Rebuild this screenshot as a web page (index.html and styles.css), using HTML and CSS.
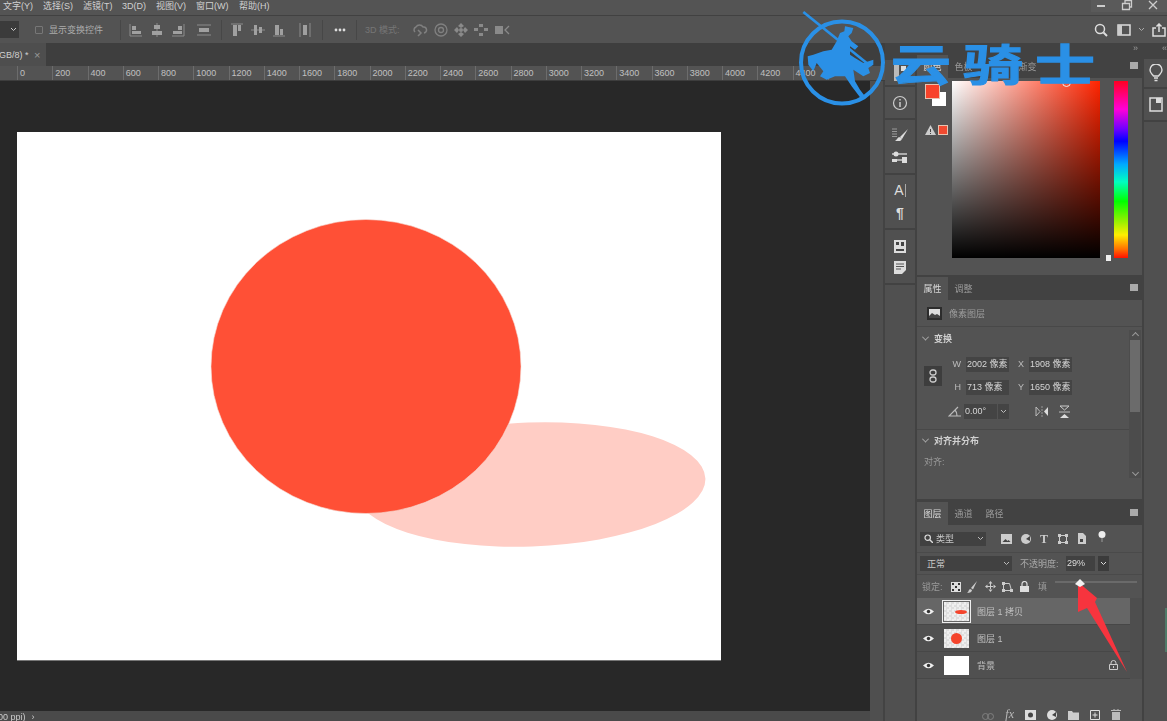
FILE: index.html
```html
<!DOCTYPE html>
<html lang="zh">
<head>
<meta charset="utf-8">
<title>Photoshop</title>
<link rel="stylesheet" href="styles.css">
</head>
<body>
<div class="app">
  <header class="menubar">
    <nav class="menus">
      <span class="m1">文字(Y)</span><span class="m2">选择(S)</span><span class="m3">滤镜(T)</span><span class="m4">3D(D)</span><span class="m5">视图(V)</span><span class="m6">窗口(W)</span><span class="m7">帮助(H)</span>
    </nav>
    <div class="winbtns">
      <svg width="12" height="12" viewBox="0 0 12 12"><rect x="2" y="6" width="8" height="2" fill="#ccc"/></svg>
      <svg width="12" height="12" viewBox="0 0 12 12"><path d="M1.500 4.500h7v6h-7zM4 4V1.500h6.500V8H9" fill="none" stroke="#ccc" stroke-width="1.300"/></svg>
      <svg width="12" height="12" viewBox="0 0 12 12"><path d="M2 2l8 8M10 2l-8 8" stroke="#ccc" stroke-width="1.300"/></svg>
    </div>
  </header>

  <section class="options">
    <div class="tool-select"><svg width="7" height="5" viewBox="0 0 7 5"><path d="M1 1l2.500 2.500L6 1" fill="none" stroke="#ccc"/></svg></div>
    <span class="check"></span><span class="opt-label">显示变换控件</span>
    <i class="sep s1"></i>
    <div class="igroup g1">
      <svg width="14" height="14" viewBox="0 0 14 14"><path d="M1 1v12h12" fill="none" stroke="#8c8c8c"/><path d="M3 3h4v4H3zM3 8h9v3H3z" fill="#a0a0a0"/></svg>
      <svg width="14" height="14" viewBox="0 0 14 14"><path d="M7 0v14" stroke="#8c8c8c"/><path d="M4 2h6v4H4zM2 8h10v4H2z" fill="#a0a0a0"/></svg>
      <svg width="14" height="14" viewBox="0 0 14 14"><path d="M13 1v12H1" fill="none" stroke="#8c8c8c"/><path d="M7 3h4v4H7zM2 8h9v3H2z" fill="#a0a0a0"/></svg>
      <svg class="wide" width="14" height="14" viewBox="0 0 14 14"><path d="M0 2h14M0 12h14" stroke="#8c8c8c"/><path d="M2 5h10v4H2z" fill="#a0a0a0"/></svg>
    </div>
    <i class="sep s2"></i>
    <div class="igroup g2">
      <svg width="14" height="14" viewBox="0 0 14 14"><path d="M1 1h12" stroke="#8c8c8c"/><path d="M3 2h4v11H3zM8 2h3v6H8z" fill="#a0a0a0"/></svg>
      <svg width="14" height="14" viewBox="0 0 14 14"><path d="M0 7h14" stroke="#8c8c8c"/><path d="M3 2h3v10H3zM8 4h3v6H8z" fill="#a0a0a0"/></svg>
      <svg width="14" height="14" viewBox="0 0 14 14"><path d="M1 13h12" stroke="#8c8c8c"/><path d="M3 2h4v10H3zM8 6h3v6H8z" fill="#a0a0a0"/></svg>
      <svg class="wide" width="14" height="14" viewBox="0 0 14 14"><path d="M2 0v14M12 0v14" stroke="#8c8c8c"/><path d="M5 2h4v10H5z" fill="#a0a0a0"/></svg>
    </div>
    <i class="sep s3"></i>
    <svg class="dots" width="12" height="4" viewBox="0 0 12 4"><circle cx="2" cy="2" r="1.400" fill="#ddd"/><circle cx="6" cy="2" r="1.400" fill="#ddd"/><circle cx="10" cy="2" r="1.400" fill="#ddd"/></svg>
    <i class="sep s4"></i>
    <span class="mode3d">3D 模式:</span>
    <div class="igroup g3">
      <svg width="16" height="14" viewBox="0 0 16 14"><path d="M3 9a3 3 0 0 1 1-5 4 4 0 0 1 7 0 3 3 0 0 1 1 6M6 7l3 3-3 3" fill="none" stroke="#808080" stroke-width="1.500"/></svg>
      <svg width="14" height="14" viewBox="0 0 14 14"><circle cx="7" cy="7" r="6" fill="none" stroke="#808080" stroke-width="1.300"/><circle cx="7" cy="7" r="2.500" fill="none" stroke="#808080" stroke-width="1.300"/></svg>
      <svg width="14" height="14" viewBox="0 0 14 14"><path d="M7 0l3 3-3 2-3-2zM7 14l3-3-3-2-3 2zM0 7l3-3 2 3-2 3zM14 7l-3-3-2 3 2 3z" fill="#8a8a8a"/><circle cx="7" cy="7" r="2" fill="#8a8a8a"/></svg>
      <svg width="14" height="14" viewBox="0 0 14 14"><path d="M5 1h4v3H5zM5 10h4v3H5zM0 5h4v3H0zM10 5h4v3h-4z" fill="#8a8a8a"/></svg>
      <svg width="16" height="14" viewBox="0 0 16 14"><path d="M1 3h8v8H1z" fill="#8a8a8a"/><path d="M15 3l-4 4 4 4" fill="none" stroke="#8a8a8a" stroke-width="1.300"/></svg>
    </div>
    <div class="opt-right">
      <svg width="14" height="14" viewBox="0 0 14 14"><circle cx="6" cy="6" r="4.500" fill="none" stroke="#ddd" stroke-width="1.500"/><path d="M9.500 9.500L13 13" stroke="#ddd" stroke-width="2"/></svg>
      <svg width="14" height="14" viewBox="0 0 14 14"><path d="M1 2h12v10H1z" fill="none" stroke="#ddd" stroke-width="1.500"/><path d="M1 2h4v10H1z" fill="#ccc"/></svg>
      <svg class="caret" width="7" height="5" viewBox="0 0 7 5"><path d="M1 1l2.500 2.500L6 1" fill="none" stroke="#aaa"/></svg>
      <svg width="14" height="14" viewBox="0 0 14 14"><path d="M4 5H1v8h12V5h-3M7 9V1M4.500 3.500L7 1l2.500 2.500" fill="none" stroke="#ddd" stroke-width="1.500"/></svg>
    </div>
  </section>

  <div class="main">
    <div class="doc">
      <div class="tabbar"><div class="tab"><span>GB/8) *</span><b>×</b></div></div>
      <div class="ruler">
        <span>0</span><span>200</span><span>400</span><span>600</span><span>800</span><span>1000</span><span>1200</span><span>1400</span><span>1600</span><span>1800</span><span>2000</span><span>2200</span><span>2400</span><span>2600</span><span>2800</span><span>3000</span><span>3200</span><span>3400</span><span>3600</span><span>3800</span><span>4000</span><span>4200</span><span>4400</span><span>4600</span>
      </div>
      <div class="doc-body">
        <div class="doc-left">
          <div class="canvas">
            <div class="artboard">
              <svg width="704" height="528" viewBox="0 0 704 528">
                <ellipse cx="513" cy="352.500" rx="175.500" ry="62" transform="rotate(-2 513 352.500)" fill="#ffcdc5"/>
                <ellipse cx="349" cy="234.500" rx="155" ry="147" fill="#ff5036" stroke="#f5e0da" stroke-width=".6"/>
              </svg>
            </div>
          </div>
          <div class="status"><span>00 ppi)</span><b>›</b></div>
        </div>
        <div class="vscroll"></div>
      </div>
    </div>

    <div class="dock">
      <div class="strip strip-left">
        <div class="sgroup h-a"><svg width="14" height="18" viewBox="0 0 14 18"><path d="M1 1h5v16H1z" fill="#bbb"/><path d="M8 2h5v5H8zM8 10l5-2v9H8z" fill="#ddd"/></svg></div>
        <div class="sgroup h-b"><svg width="16" height="16" viewBox="0 0 16 16"><circle cx="8" cy="8" r="6.500" fill="none" stroke="#ccc" stroke-width="1.200"/><path d="M8 7v5M8 4v1.500" stroke="#ccc" stroke-width="1.500"/></svg></div>
        <div class="sgroup h-c">
          <svg width="18" height="15" viewBox="0 0 18 15"><path d="M1 1h5M1 3.500h5M1 6h5M1 8.500h5" stroke="#999"/><path d="M17 1L9 9l2 2z" fill="#ddd"/><path d="M8 9c-2 1-2 3-4 4h5c2-1 2-2 1.500-3z" fill="#ddd"/></svg>
          <svg width="18" height="14" viewBox="0 0 18 14"><path d="M1 3h15M1 9h15" stroke="#ccc" stroke-width="1.500"/><circle cx="5" cy="3" r="2.500" fill="#ddd"/><rect x="11" y="6" width="5" height="6" fill="#ddd"/><rect x="1" y="8" width="5" height="3" fill="#ddd"/></svg>
        </div>
        <div class="sgroup h-c">
          <span class="glyph-a">A<i></i></span>
          <span class="glyph-p">¶</span>
        </div>
        <div class="sgroup h-c">
          <svg width="12" height="13" viewBox="0 0 12 13"><path d="M0 0h12v13H0z" fill="#ddd"/><path d="M2 2h3v3H2zM7 2h3v4H7zM2 9h8v2H2z" fill="#444"/></svg>
          <svg width="12" height="13" viewBox="0 0 12 13"><path d="M0 0h12v9l-4 4H0z" fill="#ddd"/><path d="M2 3h8M2 5.500h8M2 8h5" stroke="#555"/></svg>
        </div>
        <div class="sgroup sfill"></div>
      </div>

      <div class="panels">
        <div class="collapse"><span>»</span></div>
        <section class="panel p-color">
          <div class="ptabs"><span class="ptab active">颜色</span><span class="ptab">色板</span><span class="ptab far">渐变</span><i class="pmenu"></i></div>
          <div class="color-body">
            <div class="swatches">
              <span class="bg-sw"></span><span class="fg-sw"></span>
              <div class="warn"><svg width="11" height="10" viewBox="0 0 11 10"><path d="M5.500 0L11 10H0z" fill="#ccc"/><path d="M5 4h1v3H5zM5 8h1v1H5z" fill="#444"/></svg><span class="mini-sw"></span></div>
            </div>
            <div class="picker"><span class="picker-dot"></span></div>
            <div class="hue-wrap"><span class="hue-arrow"></span><div class="hue"></div></div>
          </div>
        </section>

        <section class="panel p-props">
          <div class="ptabs"><span class="ptab active">属性</span><span class="ptab">调整</span><i class="pmenu"></i></div>
          <div class="pixel-row">
            <svg width="15" height="13" viewBox="0 0 15 13"><path d="M0 0h15v13H0z" fill="#2c2c2c"/><path d="M2 2h11v9H2z" fill="#ddd"/><path d="M2 9l3-3 3 2 2-1 3 2v2H2z" fill="#444"/></svg>
            <span>像素图层</span>
          </div>
          <div class="props-body">
            <div class="props-main">
              <div class="sect-title"><u></u>变换</div>
              <div class="transform">
                <span class="linkbtn"><svg width="8" height="14" viewBox="0 0 8 14"><rect x="1" y="1" width="6" height="5" rx="2.500" fill="none" stroke="#ccc" stroke-width="1.300"/><rect x="1" y="8" width="6" height="5" rx="2.500" fill="none" stroke="#ccc" stroke-width="1.300"/></svg></span>
                <div class="tf-grid">
                  <label>W</label><span class="field f1">2002 像素</span><label>X</label><span class="field f2">1908 像素</span>
                  <label>H</label><span class="field f1">713 像素</span><label>Y</label><span class="field f2">1650 像素</span>
                </div>
              </div>
              <div class="rot-row">
                <svg width="14" height="11" viewBox="0 0 14 11"><path d="M13 10H1L10 1M7 4q2 2 2 6" fill="none" stroke="#bbb" stroke-width="1.200"/></svg>
                <span class="field f3">0.00°</span><span class="rot-caret"><svg width="7" height="5" viewBox="0 0 7 5"><path d="M1 1l2.500 2.500L6 1" fill="none" stroke="#bbb"/></svg></span>
                <svg class="flip" width="14" height="11" viewBox="0 0 14 11"><path d="M7 0v11" stroke="#999" stroke-dasharray="2 1"/><path d="M1 1l4 4.500L1 10z" fill="none" stroke="#bbb"/><path d="M13 1L9 5.500l4 4.500z" fill="#ddd"/></svg>
                <svg class="flip2" width="11" height="14" viewBox="0 0 11 14"><path d="M0 7h11" stroke="#bbb"/><path d="M1 1h9L5.500 5z" fill="none" stroke="#ccc"/><path d="M1 13h9L5.500 9z" fill="#ddd"/></svg>
              </div>
              <div class="divider"></div>
              <div class="sect-title t2"><u></u>对齐并分布</div>
              <div class="align-label">对齐:</div>
            </div>
            <div class="pscroll"><span class="thumb"></span></div>
          </div>
        </section>

        <section class="panel p-layers">
          <div class="ptabs"><span class="ptab active">图层</span><span class="ptab">通道</span><span class="ptab">路径</span><i class="pmenu"></i></div>
          <div class="filter-row">
            <div class="ddl dd-type"><svg width="9" height="9" viewBox="0 0 9 9"><circle cx="3.700" cy="3.700" r="2.700" fill="none" stroke="#ddd" stroke-width="1.200"/><path d="M6 6l3 3" stroke="#ddd" stroke-width="1.400"/></svg><span>类型</span><svg class="dd-c" width="7" height="5" viewBox="0 0 7 5"><path d="M1 1l2.500 2.500L6 1" fill="none" stroke="#bbb"/></svg></div>
            <div class="filter-icons">
              <svg width="11" height="10" viewBox="0 0 11 10"><path d="M0 0h11v10H0z" fill="#ccc"/><path d="M1.500 8l3-3 2 2 1-1 2 2z" fill="#444"/></svg>
              <svg width="10" height="10" viewBox="0 0 10 10"><circle cx="5" cy="5" r="5" fill="#ccc"/><path d="M5 5L9 2v5z" fill="#444"/></svg>
              <span class="t-glyph">T</span>
              <svg width="10" height="10" viewBox="0 0 10 10"><path d="M1.500 1.500h7v7h-7z" fill="none" stroke="#ccc"/><path d="M0 0h3v3H0zM7 0h3v3H7zM0 7h3v3H0zM7 7h3v3H7z" fill="#ccc"/></svg>
              <svg width="9" height="11" viewBox="0 0 9 11"><path d="M1 0h5l3 3v8H1z" fill="#ccc"/><path d="M3 6h3v3H3z" fill="#444"/></svg>
              <svg class="bulb" width="8" height="12" viewBox="0 0 8 12"><circle cx="4" cy="3.500" r="3.500" fill="#eee"/><path d="M3 7h2v4H3z" fill="#777"/></svg>
            </div>
          </div>
          <div class="blend-row">
            <div class="ddl dd-blend"><span>正常</span><svg class="dd-c" width="7" height="5" viewBox="0 0 7 5"><path d="M1 1l2.500 2.500L6 1" fill="none" stroke="#bbb"/></svg></div>
            <span class="op-label">不透明度:</span>
            <span class="op-field">29%</span>
            <span class="op-caret"><svg width="7" height="5" viewBox="0 0 7 5"><path d="M1 1l2.500 2.500L6 1" fill="none" stroke="#ddd"/></svg></span>
          </div>
          <div class="lock-row">
            <span class="lock-label">锁定:</span>
            <svg width="10" height="10" viewBox="0 0 10 10"><path d="M0 0h10v10H0z" fill="#ddd"/><path d="M1 1h2v2H1zM7 1h2v2H7zM4 4h2v2H4zM1 7h2v2H1zM7 7h2v2H7z" fill="#333"/></svg>
            <svg width="11" height="12" viewBox="0 0 11 12"><path d="M10 0L4 7l2 1.500zM3 8c-2 1-1 3-3 4 3 0 5-1 5-3z" fill="#ccc"/></svg>
            <svg width="11" height="11" viewBox="0 0 11 11"><path d="M5.500 0l2 2.500h-4zM5.500 11l2-2.500h-4zM0 5.500l2.500-2v4zM11 5.500l-2.500-2v4zM5 2h1v7H5zM2 5h7v1H2z" fill="#ccc"/></svg>
            <svg width="11" height="10" viewBox="0 0 11 10"><path d="M1.500 1.500h6l2 7h-8z" fill="none" stroke="#ccc"/><path d="M0 0h3v3H0zM0 7h3v3H0zM8 7h3v3H8z" fill="#ccc"/></svg>
            <svg width="9" height="11" viewBox="0 0 9 11"><path d="M2 5V3a2.500 2.500 0 0 1 5 0v2" fill="none" stroke="#ddd" stroke-width="1.200"/><path d="M0 5h9v6H0z" fill="#ddd"/></svg>
            <span class="fill-label">填</span>
            <div class="fill-slider"></div>
          </div>
          <div class="layer-list">
            <div class="layer selected">
              <svg class="eye" width="11" height="7" viewBox="0 0 11 7"><path d="M0 3.500Q5.500-2 11 3.500 5.500 9 0 3.500z" fill="#eee"/><circle cx="5.500" cy="3.500" r="1.700" fill="#333"/></svg>
              <span class="thumb-l checker sel"><em class="mini-ell"></em></span><span class="l-name">图层 1 拷贝</span>
            </div>
            <div class="layer">
              <svg class="eye" width="11" height="7" viewBox="0 0 11 7"><path d="M0 3.500Q5.500-2 11 3.500 5.500 9 0 3.500z" fill="#eee"/><circle cx="5.500" cy="3.500" r="1.700" fill="#333"/></svg>
              <span class="thumb-l checker"><em class="mini-dot"></em></span><span class="l-name">图层 1</span>
            </div>
            <div class="layer">
              <svg class="eye" width="11" height="7" viewBox="0 0 11 7"><path d="M0 3.500Q5.500-2 11 3.500 5.500 9 0 3.500z" fill="#eee"/><circle cx="5.500" cy="3.500" r="1.700" fill="#333"/></svg>
              <span class="thumb-l white"></span><span class="l-name">背景</span>
              <svg class="l-lock" width="9" height="10" viewBox="0 0 9 10"><path d="M2 4.500V3a2.500 2.500 0 0 1 5 0v1.500" fill="none" stroke="#ccc"/><path d="M.5 4.500h8v5h-8z" fill="none" stroke="#ccc"/><path d="M4 6h1v2H4z" fill="#ccc"/></svg>
            </div>
          </div>
          <div class="layer-foot">
            <svg width="12" height="7" viewBox="0 0 12 7"><rect x=".5" y=".5" width="6" height="6" rx="3" fill="none" stroke="#808080"/><rect x="5.500" y=".5" width="6" height="6" rx="3" fill="none" stroke="#808080"/></svg>
            <span class="fx">fx</span>
            <svg width="11" height="10" viewBox="0 0 11 10"><path d="M0 0h11v10H0z" fill="#ddd"/><circle cx="5.500" cy="5" r="2.500" fill="#444"/></svg>
            <svg width="10" height="10" viewBox="0 0 10 10"><circle cx="5" cy="5" r="5" fill="#ddd"/><path d="M5 5L9 2v5z" fill="#444"/></svg>
            <svg width="11" height="9" viewBox="0 0 11 9"><path d="M0 0h4l1 1.500h6V9H0z" fill="#ccc"/></svg>
            <svg width="10" height="10" viewBox="0 0 10 10"><path d="M.5.500h9v9h-9zM5 2.500v5M2.500 5h5" fill="none" stroke="#ddd"/></svg>
            <svg width="10" height="11" viewBox="0 0 10 11"><path d="M0 1.500h10M3 1.500V0h4v1.500" stroke="#bbb"/><path d="M1 3h8v8H1z" fill="#bbb"/></svg>
          </div>
        </section>
      </div>

      <div class="strip strip-right">
        <div class="collapse-r">«</div>
        <div class="sgroup h-d"><svg width="14" height="18" viewBox="0 0 14 18"><path d="M4.500 12C3 10 1 9 1 6a6 6 0 0 1 12 0c0 3-2 4-3.500 6z" fill="none" stroke="#ddd" stroke-width="1.400"/><path d="M5 14h4M5.500 16.500h3" stroke="#ddd" stroke-width="1.400"/></svg></div>
        <div class="sgroup h-b2"><svg width="14" height="15" viewBox="0 0 14 15"><path d="M1 1h12v13H1z" fill="none" stroke="#ddd" stroke-width="1.500"/><path d="M7 1h5v5H7z" fill="#ddd"/></svg></div>
        <div class="sgroup sfill"></div>
      </div>
    </div>
  </div>

  <span class="edge-sliver"></span>

  <svg class="arrow" width="60" height="100" viewBox="1070 578 60 100"><path d="M1078 582L1097 598 1095 602 1127 672 1087 608 1078 612z" fill="#f7343e"/><path d="M1075 584l5-5 5 5-5 3z" fill="#f2f2f2"/></svg>

  <div class="watermark">
    <svg width="100" height="104" viewBox="0 0 300 312">
      <ellipse cx="141" cy="163.500" rx="123" ry="123" fill="none" stroke="#2a90e6" stroke-width="12"/>
      <path d="M25 12L215 165" stroke="#2a90e6" stroke-width="8"/>
      <path d="M38 145L55 140 85 130 110 125 125 100 135 75 148 70 150 55 175 60 170 75 160 85 170 100 190 115 180 125 165 115 165 140 180 150 205 165 235 155 235 170 220 180 225 195 205 205 190 195 175 185 180 220 195 245 210 265 195 268 170 235 150 205 120 205 95 215 75 205 85 190 65 165 55 190 40 170z" fill="#2a90e6"/>
    </svg>
    <span class="wm-text">云骑士</span>
  </div>
</div>
</body>
</html>
```

FILE: styles.css
```css
* { box-sizing: border-box; }
html, body { margin: 0; padding: 0; }
body {
  width: 1167px;
  height: 721px;
  overflow: hidden;
  background: #535353;
  font-family: "Liberation Sans", "Noto Sans CJK SC", sans-serif;
  color: #c4c4c4;
  font-size: 9px;
}
svg { display: block; flex: none; }
.app {
  position: relative;
  width: 1167px;
  height: 721px;
  display: flex;
  flex-direction: column;
  overflow: hidden;
  filter: blur(.45px);
}

/* menu */
.menubar {
  height: 16px;
  flex: none;
  display: flex;
  justify-content: space-between;
  background: #545454;
  border-bottom: 1px solid #414141;
}
.menus { display: flex; padding-left: 3px; line-height: 12px; color: #d0d0d0; }
.menus .m1 { width: 40px; }
.menus .m2 { width: 40px; }
.menus .m3 { width: 39px; }
.menus .m4 { width: 34px; }
.menus .m5 { width: 40px; }
.menus .m6 { width: 43px; }
.winbtns { display: flex; gap: 14px; padding: 0 8px 0 4px; margin-top: -3px; background: #5a5a5a; height: 15px; align-items: center; }

/* options */
.options {
  height: 27px;
  flex: none;
  display: flex;
  align-items: center;
  background: #535353;
}
.tool-select {
  width: 19px; height: 17px;
  background: #3b3b3b;
  display: flex; align-items: center; justify-content: flex-end;
  padding-right: 2px;
}
.check { width: 8px; height: 8px; border: 1px solid #777; margin-left: 16px; border-radius: 1px; }
.opt-label { margin-left: 6px; width: 60px; white-space: nowrap; color: #ababab; }
.sep { width: 1px; height: 20px; background: #474747; flex: none; }
.sep.s1 { margin-left: 11px; }
.igroup { display: flex; align-items: center; }
.g1 { margin-left: 8px; gap: 7px; }
.g2 { margin-left: 8px; gap: 7px; }
.igroup .wide { margin-left: 5px; }
.sep.s2 { margin-left: 10px; }
.sep.s3 { margin-left: 10px; }
.dots { margin-left: 11px; }
.sep.s4 { margin-left: 10px; }
.mode3d { margin-left: 8px; width: 38px; color: #767676; white-space: nowrap; }
.g3 { margin-left: 9px; gap: 6px; }
.opt-right { margin-left: auto; display: flex; align-items: center; gap: 9px; padding-right: 1px; }
.opt-right .caret { margin: 0 -1.500px 0 -2.500px; }

/* main */
.main { flex: 1; display: flex; min-height: 0; }
.doc { width: 885px; flex: none; display: flex; flex-direction: column; }
.tabbar { height: 23px; flex: none; background: #3e3e3e; }
.tab {
  width: 46px; height: 23px;
  background: #4e4e4e;
  display: flex; align-items: center;
  white-space: nowrap;
  color: #d0d0d0;
  overflow: hidden;
}
.tab span { width: 33px; flex: none; margin-left: -1px; }
.tab b { font-weight: normal; color: #999; font-size: 11px; margin-left: 2px; }
.ruler {
  height: 15px; flex: none;
  display: flex;
  background: #535353;
  border-bottom: 1px solid #3d3d3d;
  padding-left: 17px;
  overflow: hidden;
}
.ruler span {
  width: 35.250px; flex: none;
  border-left: 1px solid #6c6c6c;
  padding-left: 2px;
  line-height: 15px;
  color: #c0c0c0;
}
.doc-body { flex: 1; display: flex; min-height: 0; }
.doc-left { width: 870px; flex: none; display: flex; flex-direction: column; }
.canvas { flex: 1; background: #282828; padding: 51px 0 0 17px; min-height: 0; }
.artboard { width: 704px; height: 528px; background: #fff; box-shadow: 0 1px 0 #777; }
.status { height: 10px; flex: none; background: #4a4a4a; display: flex; line-height: 10px; color: #ccc; margin-left: -2px; gap: 6px; padding-top: 1px; white-space: nowrap; }
.status b { font-weight: normal; }
.vscroll { width: 15px; flex: none; background: #4f4f4f; border-right: 2px solid #434343; }

/* dock */
.dock { flex: 1; display: flex; background: #424242; min-width: 0; }
.strip { display: flex; flex-direction: column; }
.strip-left { width: 32px; flex: none; padding-top: 17px; gap: 2px; }
.sgroup { background: #505050; display: flex; flex-direction: column; align-items: center; justify-content: center; width: 30px; }
.h-a { height: 25px; }
.h-b { height: 31px; }
.h-c { height: 53px; gap: 8px; }
.sfill { flex: 1; }
.glyph-a { font-size: 14px; color: #ddd; line-height: 15px; display: flex; align-items: center; }
.glyph-a i { width: 1px; height: 13px; background: #aaa; margin-left: 1px; }
.glyph-p { font-size: 14px; line-height: 15px; font-weight: bold; color: #ddd; }

.panels { width: 225px; flex: none; display: flex; flex-direction: column; }
.collapse { height: 12px; flex: none; display: flex; justify-content: flex-end; padding-right: 4px; line-height: 10px; color: #999; }
.panel { background: #535353; display: flex; flex-direction: column; }
.p-color { height: 220px; flex: none; }
.p-props { height: 222px; flex: none; margin-top: 2px; }
.p-layers { flex: 1; margin-top: 3px; min-height: 0; }
.ptabs { height: 23px; flex: none; background: #424242; display: flex; align-items: stretch; }
.ptab { width: 31px; display: flex; align-items: center; justify-content: center; color: #9a9a9a; }
.ptab.active { background: #535353; color: #d8d8d8; }
.ptab.far { margin-left: 33px; }
.pmenu { margin: 7px 4px 0 auto; width: 8px; height: 7px; background: #aaa; }

/* colour */
.color-body { flex: 1; display: flex; padding: 3px 0 0 8px; }
.swatches { width: 27px; flex: none; position: relative; }
.bg-sw { position: absolute; left: 7px; top: 11px; width: 14px; height: 14px; background: #fff; }
.fg-sw { position: absolute; left: 0; top: 3px; width: 15px; height: 15px; background: #f8432a; border: 1px solid #e8c3b0; }
.warn { position: absolute; left: 0; top: 44px; display: flex; align-items: center; gap: 2px; }
.mini-sw { width: 10px; height: 10px; background: #f04a30; border: 1px solid #e8c3b0; }
.picker {
  width: 148px; height: 177px; flex: none;
  position: relative;
  background: linear-gradient(to top, #000, rgba(0,0,0,0)), linear-gradient(to right, #fff, #ff2400);
}
.picker-dot { position: absolute; left: 110px; top: -3px; width: 9px; height: 9px; border: 1px solid #eee; border-radius: 50%; }
.hue-wrap { position: relative; margin-left: 14px; }
.hue {
  width: 14px; height: 177px;
  background: linear-gradient(to bottom, #ff0020 0%, #ff00d8 16%, #7000ff 27%, #0000ff 34%, #00a8ff 47%, #00ffc0 57%, #00ff00 68%, #a0f000 80%, #ffee00 87%, #ff7000 95%, #ff1000 100%);
}
.hue-arrow { position: absolute; left: -8px; top: 174px; width: 5px; height: 6px; background: #eee; }

/* props */
.pixel-row { height: 27px; flex: none; display: flex; align-items: center; gap: 7px; padding-left: 10px; color: #9d9d9d; border-bottom: 1px solid #484848; }
.props-body { flex: 1; display: flex; min-height: 0; }
.props-main { flex: 1; padding-top: 3px; min-width: 0; }
.sect-title { height: 16px; display: flex; align-items: center; gap: 6px; padding-left: 6px; color: #d0d0d0; font-weight: bold; }
.sect-title u { width: 5px; height: 5px; border: solid #aaa; border-width: 0 1px 1px 0; transform: rotate(45deg) translate(-1px,-1px); display: block; }
.transform { display: flex; align-items: center; padding: 11px 0 0 7px; }
.linkbtn { width: 18px; height: 20px; background: #3d3d3d; display: flex; align-items: center; justify-content: center; }
.tf-grid { display: grid; grid-template-columns: 25px 43px 20px 43px; grid-template-rows: 15px 15px; row-gap: 8px; margin-left: -1px; align-items: stretch; }
.tf-grid label { text-align: right; padding-right: 5px; line-height: 15px; color: #bdbdbd; }
.field { background: #444; color: #d6d6d6; line-height: 15px; padding-left: 1px; white-space: nowrap; overflow: hidden; }
.rot-row { display: flex; align-items: center; height: 15px; margin-top: 9px; padding-left: 31px; }
.rot-row .f3 { width: 33px; margin-left: 2px; }
.rot-caret { width: 11px; height: 15px; background: #444; margin-left: 1px; display: flex; align-items: center; justify-content: center; }
.flip { margin-left: 26px; }
.flip2 { margin-left: 10px; }
.divider { height: 1px; background: #484848; margin-top: 10px; }
.sect-title.t2 { margin-top: 2px; }
.align-label { margin: 7px 0 0 7px; color: #9a9a9a; }
.pscroll { width: 12px; flex: none; margin: 3px 1px 21px 0; background: #4c4c4c; position: relative; }
.pscroll::before, .pscroll::after { content: ""; position: absolute; left: 3.500px; width: 4px; height: 4px; border: solid #999; }
.pscroll::before { top: 3px; border-width: 1px 0 0 1px; transform: rotate(45deg); }
.pscroll::after { bottom: 3px; border-width: 0 1px 1px 0; transform: rotate(45deg); }
.thumb { position: absolute; left: 1px; right: 1px; top: 10px; height: 72px; background: #6b6b6b; }

/* layers */
.filter-row { height: 27px; flex: none; display: flex; align-items: center; padding: 0 0 0 3px; }
.ddl { background: #414141; height: 14px; display: flex; align-items: center; gap: 3px; padding-left: 4px; position: relative; color: #c8c8c8; }
.dd-c { margin-left: auto; margin-right: 2px; }
.dd-type { width: 66px; }
.filter-icons { display: flex; align-items: center; gap: 9px; margin-left: 15px; }
.t-glyph { font-family: "Liberation Serif", serif; font-weight: bold; font-size: 12px; line-height: 12px; color: #ccc; width: 9px; }
.bulb { margin: -4px 0 0 3px; }
.blend-row { height: 22px; flex: none; display: flex; align-items: center; padding-left: 3px; border-top: 1px solid #4a4a4a; }
.dd-blend { width: 92px; padding-left: 7px; height: 15px; }
.op-label { margin-left: 8px; width: 45px; color: #a8a8a8; white-space: nowrap; }
.op-field { background: #414141; height: 15px; line-height: 15px; width: 29px; margin-left: 1px; padding-left: 1px; color: #ddd; }
.op-caret { width: 11px; height: 15px; background: #3b3b3b; margin-left: 3px; display: flex; align-items: center; justify-content: center; }
.lock-row { height: 24px; flex: none; display: flex; align-items: center; padding-left: 5px; gap: 6.500px; border-top: 1px solid #4a4a4a; }
.lock-label { width: 20px; color: #9a9a9a; white-space: nowrap; margin-right: 2px; }
.fill-label { color: #9a9a9a; margin-left: 3px; }
.fill-slider { width: 82px; height: 2px; background: #6a6a6a; margin: -9px 0 0 1px; }
.layer-list { height: 81px; flex: none; padding-right: 12px; background: #4e4e4e; }
.layer { height: 27px; display: flex; align-items: center; background: #505050; border-bottom: 1px solid #474747; }
.layer.selected { background: #666; }
.eye { margin-left: 6px; }
.thumb-l { width: 25px; height: 19px; margin-left: 10px; position: relative; display: block; flex: none; }
.checker { background-color: #e8e8e8; background-image: repeating-conic-gradient(#dedede 0 25%, #efefef 0 50%); background-size: 5px 5px; }
.white { background: #fff; }
.thumb-l.sel { outline: 1px solid #eee; outline-offset: 1px; }
.mini-ell { position: absolute; left: 11px; top: 8px; width: 12px; height: 4px; background: #f4442c; border-radius: 50%; }
.mini-dot { position: absolute; left: 7px; top: 4px; width: 11px; height: 11px; background: #f4442c; border-radius: 50%; }
.l-name { margin-left: 8px; color: #c0c0c0; }
.l-lock { margin-left: auto; margin-right: 12px; }
.layer-foot { flex: 1; display: flex; align-items: flex-end; justify-content: flex-end; gap: 11px; padding: 0 21px 1px 0; }
.fx { font-family: "Liberation Serif", serif; font-style: italic; font-size: 12px; line-height: 11px; color: #bbb; }

/* right strip */
.strip-right { flex: 1; padding-left: 2px; gap: 2px; }
.collapse-r { height: 14px; text-align: right; color: #999; line-height: 10px; }
.strip-right .sgroup { width: auto; }
.strip-right .sfill { flex: 1; }
.h-d { height: 28px; }
.h-b2 { height: 31px; }

/* overlays */
.edge-sliver { position: absolute; left: 1165px; top: 608px; width: 2px; height: 44px; background: #4f7a68; }
.arrow { position: absolute; left: 1070px; top: 578px; }
.watermark { position: absolute; left: 795px; top: 8px; }
.wm-text {
  position: absolute;
  left: 96px; top: 18px;
  font-family: "Noto Sans CJK SC", sans-serif;
  font-weight: 700;
  font-size: 60px;
  line-height: 72px;
  letter-spacing: 12px;
  white-space: nowrap;
  color: #2a90e6;
  -webkit-text-stroke: 1.500px #2a90e6;
  transform: scaleY(.72);
  transform-origin: 0 50%;
}
```
